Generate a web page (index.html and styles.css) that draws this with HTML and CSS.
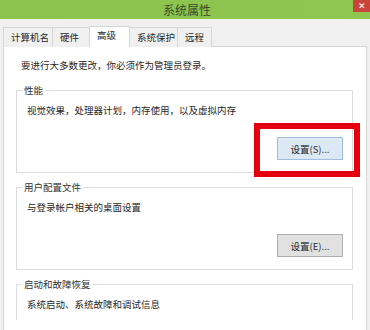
FILE: index.html
```html
<!DOCTYPE html>
<html lang="zh-CN">
<head>
<meta charset="utf-8">
<title>系统属性</title>
<link rel="stylesheet" href="styles.css">
</head>
<body>
<div class="window">
  <div class="titlebar">
    <span class="title">系统属性</span>
    <span class="close">✕</span>
  </div>
  <div class="tabs">
    <div class="tab">计算机名</div>
    <div class="tab">硬件</div>
    <div class="tab active">高级</div>
    <div class="tab">系统保护</div>
    <div class="tab">远程</div>
  </div>
  <div class="panel">
    <p class="intro">要进行大多数更改，你必须作为管理员登录。</p>
    <fieldset class="group">
      <legend>性能</legend>
      <p class="desc">视觉效果，处理器计划，内存使用，以及虚拟内存</p>
      <div class="actions"><button class="btn focused">设置(S)...</button></div>
    </fieldset>
    <fieldset class="group">
      <legend>用户配置文件</legend>
      <p class="desc">与登录帐户相关的桌面设置</p>
      <div class="actions"><button class="btn">设置(E)...</button></div>
    </fieldset>
    <fieldset class="group last">
      <legend>启动和故障恢复</legend>
      <p class="desc">系统启动、系统故障和调试信息</p>
    </fieldset>
  </div>
  <div class="highlight"></div>
</div>
</body>
</html>
```

FILE: styles.css
```css
* { box-sizing: border-box; }
html, body {
  margin: 0;
  padding: 0;
  width: 370px;
  height: 330px;
  overflow: hidden;
  background: #f0f0f0;
}
.window {
  position: relative;
  width: 370px;
  height: 330px;
  overflow: hidden;
  font-family: "Noto Sans CJK SC", "Microsoft YaHei", sans-serif;
  font-size: 9.5px;
  color: #262626;
}
.titlebar {
  position: relative;
  height: 19px;
  background: linear-gradient(to right, #8cc34c, #8fc650);
  display: flex;
  align-items: center;
  justify-content: center;
}
.title {
  font-size: 12px;
  color: #3b4a2c;
  line-height: 19px;
  margin-left: 4px;
}
.close {
  position: absolute;
  right: 0;
  top: 0;
  width: 17px;
  height: 12px;
  background: #c9453c;
  color: #fff;
  font-size: 9px;
  line-height: 12px;
  text-align: center;
}
.tabs {
  display: grid;
  grid-template-columns: 49px 37px 41px 47px 35px;
  align-items: end;
  padding: 7px 0 0 3px;
  height: 28px;
  position: relative;
  z-index: 1;
}
.tab {
  height: 20px;
  border: 1px solid #d6d6d6;
  border-bottom: none;
  border-right: none;
  background: #f0f0f0;
  padding-left: 7px;
  line-height: 19px;
  white-space: nowrap;
}
.tab:last-child { border-right: 1px solid #d6d6d6; }
.tab.active {
  height: 21px;
  background: #fff;
  border-right: 1px solid #d6d6d6;
  line-height: 17px;
  padding-bottom: 2px;
}
.tab.active + .tab { border-left: none; }
.panel {
  margin: -1px 3px 0 3px;
  height: 284px;
  background: #fff;
  border: 1px solid #d6d6d6;
  border-bottom: none;
  padding: 12px 13px 0 12px;
}
.intro {
  margin: 0 0 13px 5px;
  line-height: 12px;
}
.group {
  margin: 0 0 8px 0;
  padding: 0 9px 12px 10px;
  border: 1px solid #dcdcdc;
  min-width: 0;
}
.group.last {
  border-bottom: none;
  margin-bottom: 0;
  padding-bottom: 10px;
}
.group legend {
  margin-left: -5px;
  padding: 0 2px;
  line-height: 12px;
  color: #333;
}
.desc {
  margin: 8px 0 0 0;
  line-height: 12px;
}
.actions {
  display: flex;
  justify-content: flex-end;
  margin-top: 21px;
}
.btn {
  width: 66px;
  height: 23px;
  font-family: inherit;
  font-size: 9.5px;
  color: #262626;
  background: #e1e1e1;
  border: 1px solid #adadad;
  padding: 0;
  margin: 0;
}
.btn.focused {
  background: #dde8f5;
  border-color: #9fbddf;
}
.highlight {
  position: absolute;
  left: 254px;
  top: 123px;
  width: 106px;
  height: 54px;
  border: 6px solid #e6000f;
}
```
